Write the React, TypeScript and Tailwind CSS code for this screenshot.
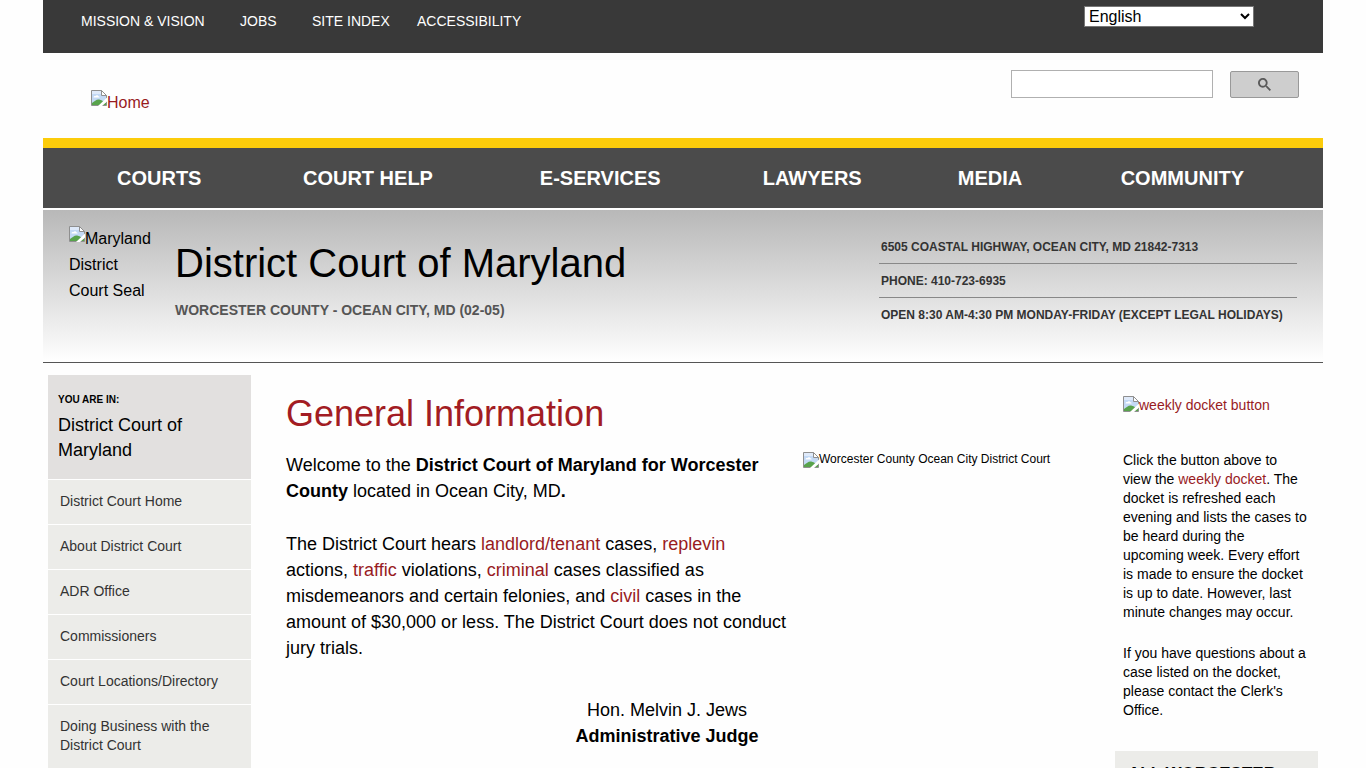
import { useState, type ReactNode } from 'react';

const topLinks = ['Mission & Vision', 'Jobs', 'Site Index', 'Accessibility'];

const mainLinks = ['Courts', 'Court Help', 'E-Services', 'Lawyers', 'Media', 'Community'];

const sideLinks = [
  'District Court Home',
  'About District Court',
  'ADR Office',
  'Commissioners',
  'Court Locations/Directory',
  'Doing Business with the District Court',
];

// Placeholder page icon with alt text, as shown when an image is missing
function MissingImage({ alt }: { alt: string }) {
  return (
    <span className="block">
      <svg className="float-left w-4 h-4" viewBox="0 0 16 16" aria-hidden="true">
        <path d="M0.5 0.5H10.5L15.5 5.5V15.5H0.5Z" fill="#c3d9f5" />
        <path d="M1 1H10.5V4H1Z" fill="#dfeafa" />
        <path d="M2.500 7.500C2.500 6.200 3.800 5.800 4.500 6.100C5 4.800 7 4.900 7.300 6.200C8.400 6.100 8.700 7 8.500 7.500Z" fill="#fff" />
        <path d="M1 15V13C3.500 11.500 5 9.500 7.500 9.500C9.500 9.500 11 10.500 15 13V15Z" fill="#58a34c" />
        <path d="M0.5 0.5H10.5L15.5 5.5V15.5H0.5Z" fill="none" stroke="#8f8f8f" />
        <path d="M10.5 0.5V5.5H15.5Z" fill="#fff" stroke="#8f8f8f" />
        <path d="M16 7.500L7 16H11L16 11.500Z" fill="#fff" />
      </svg>
      {alt}
    </span>
  );
}

function RedLink({ children }: { children: ReactNode }) {
  return (
    <a href="#" className="text-[#981b1e] hover:underline">
      {children}
    </a>
  );
}

function TopBar() {
  const [language, setLanguage] = useState('English');

  return (
    <div className="bg-[#393939] h-[53px] flex justify-between items-start pl-[38px] pr-[69px]">
      <nav className="grid grid-cols-[159px_72px_105px_auto] pt-[11px] text-sm leading-5 uppercase text-white">
        {topLinks.map((label) => (
          <a key={label} href="#" className="hover:underline">{label}</a>
        ))}
      </nav>
      <select
        aria-label="Language"
        value={language}
        onChange={(e) => setLanguage(e.target.value)}
        className="mt-[6px] w-[170px] h-[21px] bg-white border border-[#767676] text-base leading-5 text-black"
      >
        <option>English</option>
        <option>Español</option>
        <option>Français</option>
      </select>
    </div>
  );
}

function Masthead() {
  return (
    <header className="h-[85px] flex justify-between items-start pl-12 pr-6">
      <a href="#" className="mt-[37px] text-base leading-[26px] text-[#981b1e]">
        <MissingImage alt="Home" />
      </a>
      <form className="flex items-center gap-[17px] pt-[17px]" onSubmit={(e) => e.preventDefault()}>
        <input
          type="text"
          aria-label="Search"
          className="w-[202px] h-7 border border-[#b0b0b0] bg-white px-2 text-sm"
        />
        <button
          type="submit"
          aria-label="Search"
          className="w-[69px] h-[27px] flex items-center justify-center rounded-xs border border-[#999] bg-[#cecece]"
        >
          <svg className="w-[13px] h-[13px]" viewBox="0 0 13 13" fill="#5a5a5a" aria-hidden="true">
            <path d="m4.8495 7.8226c0.82666 0 1.5262-0.29146 2.0985-0.87438 0.57232-0.58292 0.86378-1.2877 0.87438-2.1144 0.010599-0.82666-0.28086-1.5262-0.87438-2.0985-0.59352-0.57232-1.293-0.86378-2.0985-0.87438-0.8055-0.010599-1.5103 0.28086-2.1144 0.87438-0.60414 0.59352-0.8956 1.293-0.87438 2.0985 0.021197 0.8055 0.31266 1.5103 0.87438 2.1144 0.56172 0.60414 1.2665 0.8956 2.1144 0.87438zm4.4695 0.2115 3.681 3.6819-1.259 1.284-3.6817-3.7 0.0019784-0.69479-0.090043-0.098846c-0.87973 0.76087-1.92 1.1413-3.1207 1.1413-1.3553 0-2.5025-0.46363-3.4417-1.3909s-1.4088-2.0686-1.4088-3.4239c0-1.3553 0.4696-2.4966 1.4088-3.4239 0.9392-0.92727 2.0864-1.3969 3.4417-1.4088 1.3553-0.011889 2.4906 0.45771 3.406 1.4088 0.9154 0.95107 1.379 2.0924 1.3909 3.4239 0 1.2126-0.38043 2.2588-1.1413 3.1385l0.098834 0.090049z" />
          </svg>
        </button>
      </form>
    </header>
  );
}

function MainNav() {
  return (
    <nav className="border-t-[10px] border-[#fccc0a] bg-[#4b4b4b] h-[70px] pl-[74px] pr-[79px] grid grid-cols-[186fr_237fr_223fr_195fr_163fr_123fr] items-center">
      {mainLinks.map((label) => (
        <a key={label} href="#" className="text-xl leading-7 font-bold uppercase text-white whitespace-nowrap">
          {label}
        </a>
      ))}
    </nav>
  );
}

function CourtBanner() {
  return (
    <section className="mt-[2px] h-[153px] border-b border-[#555] bg-linear-to-b from-[#b8b8b8] to-white flex items-start">
      <div className="w-[132px] shrink-0 pl-[26px] pr-5 pt-4 text-base leading-[26px]">
        <MissingImage alt="Maryland District Court Seal" />
      </div>
      <div className="grow pt-[28px]">
        <h1 className="text-[40px] leading-[50px]">District Court of Maryland</h1>
        <h2 className="mt-3 text-sm leading-5 font-bold uppercase text-[#555]">
          Worcester County - Ocean City, MD (02-05)
        </h2>
      </div>
      <address className="not-italic w-[418px] shrink-0 mr-[26px] pt-5 text-xs leading-[31px] font-bold uppercase text-[#333]">
        <p className="border-b border-[#888] pl-[2px] pt-[2px]">6505 Coastal Highway, Ocean City, MD 21842-7313</p>
        <p className="border-b border-[#888] pl-[2px] pt-[2px]">Phone: 410-723-6935</p>
        <p className="pl-[2px] pt-[2px]">Open 8:30 AM-4:30 PM Monday-Friday (Except Legal Holidays)</p>
      </address>
    </section>
  );
}

function SideNav() {
  return (
    <nav className="w-[203px] shrink-0 mt-3">
      <div className="bg-[#e2e0df] h-[104px] px-[10px] pt-[17px]">
        <p className="text-[10px] leading-4 font-bold uppercase">You are in:</p>
        <p className="mt-[5px] text-lg leading-[25px]">District Court of Maryland</p>
      </div>
      <ul className="bg-[#ecece9] text-sm leading-[19px] text-[#333]">
        {sideLinks.map((label) => (
          <li key={label} className="border-t border-white">
            <a href="#" className="block px-3 pt-3 pb-[13px] hover:underline">{label}</a>
          </li>
        ))}
      </ul>
    </nav>
  );
}

function MainContent() {
  return (
    <main className="grow min-w-0 pl-[35px] pt-[26px]">
      <h2 className="text-4xl leading-[50px] text-[#a21c23]">General Information</h2>
      <div className="flex items-start mt-[13px]">
        <div className="w-[505px] shrink-0 text-lg leading-[26px]">
          <p>
            Welcome to the <strong>District Court of Maryland for Worcester County</strong> located in Ocean City, MD<strong>.</strong>
          </p>
          <p className="mt-[27px]">
            The District Court hears <RedLink>landlord/tenant</RedLink> cases, <RedLink>replevin</RedLink> actions,{' '}
            <RedLink>traffic</RedLink> violations, <RedLink>criminal</RedLink> cases classified as misdemeanors and
            certain felonies, and <RedLink>civil</RedLink> cases in the amount of $30,000 or less. The District Court
            does not conduct jury trials.
          </p>
        </div>
        <div className="ml-3 text-xs leading-[15px] whitespace-nowrap">
          <MissingImage alt="Worcester County Ocean City District Court" />
        </div>
      </div>
      <p className="mt-9 mr-[67px] text-center text-lg leading-[26px]">
        Hon. Melvin J. Jews
        <br />
        <strong>Administrative Judge</strong>
      </p>
    </main>
  );
}

function DocketColumn() {
  return (
    <aside className="w-[203px] shrink-0 mt-[33px] text-sm leading-[19px]">
      <div className="pl-2 pr-[10px]">
        <a href="#" className="text-[#981b1e] whitespace-nowrap">
          <MissingImage alt="weekly docket button" />
        </a>
        <p className="mt-9">
          Click the button above to view the <RedLink>weekly docket</RedLink>. The docket is refreshed each evening and
          lists the cases to be heard during the upcoming week. Every effort is made to ensure the docket is up to date.
          However, last minute changes may occur.
        </p>
        <p className="mt-[22px]">
          If you have questions about a case listed on the docket, please contact the Clerk's Office.
        </p>
      </div>
      <section className="mt-[31px] bg-[#ecece9] px-[13px] py-3">
        <h3 className="text-[17px] leading-[22px] font-bold uppercase">All Worcester</h3>
      </section>
    </aside>
  );
}

export default function App() {
  return (
    <div className="min-h-screen bg-[#fefefe] font-['Liberation_Sans',Arial,sans-serif] text-black">
      <div className="max-w-[1280px] mx-auto">
        <TopBar />
        <Masthead />
        <MainNav />
        <CourtBanner />
        <div className="flex items-start px-[5px]">
          <SideNav />
          <MainContent />
          <DocketColumn />
        </div>
      </div>
    </div>
  );
}
